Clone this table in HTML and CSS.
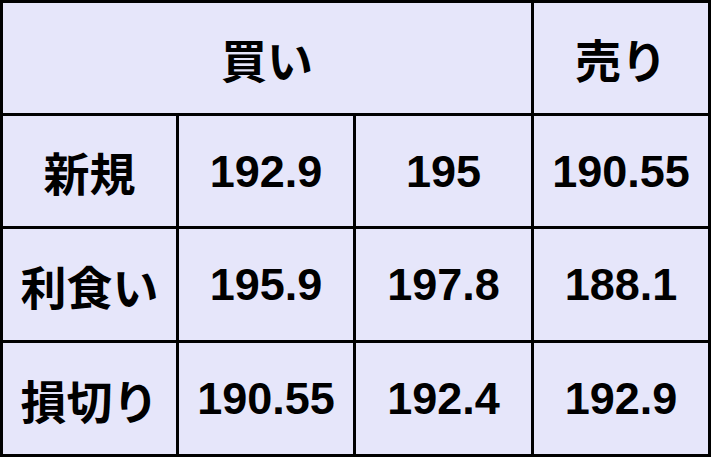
FILE: index.html
```html
<!DOCTYPE html>
<html lang="ja">
<head>
<meta charset="utf-8">
<title>売買表</title>
<link rel="stylesheet" href="styles.css">
</head>
<body>
<div class="grid">
  <div class="cell head span3">買い</div>
  <div class="cell head">売り</div>

  <div class="cell label">新規</div>
  <div class="cell num">192.9</div>
  <div class="cell num">195</div>
  <div class="cell num">190.55</div>

  <div class="cell label">利食い</div>
  <div class="cell num">195.9</div>
  <div class="cell num">197.8</div>
  <div class="cell num">188.1</div>

  <div class="cell label">損切り</div>
  <div class="cell num">190.55</div>
  <div class="cell num">192.4</div>
  <div class="cell num">192.9</div>
</div>
</body>
</html>
```

FILE: styles.css
```css
html, body {
  margin: 0;
  padding: 0;
  background: #e6e6fa;
}

.grid {
  display: grid;
  grid-template-columns: 173px 174px 175px 174px;
  grid-template-rows: 110px 110px 111px 111px;
  gap: 3px;
  padding: 3px;
  width: 711px;
  height: 457px;
  box-sizing: border-box;
  background: #000;
}

.cell {
  background: #e6e6fa;
  display: flex;
  align-items: center;
  justify-content: center;
  color: #000;
  font-family: "Liberation Sans", Arial, "Noto Sans CJK JP", sans-serif;
  font-size: 46px;
  font-weight: 700;
  line-height: 1;
}

.span3 {
  grid-column: span 3;
}

.head, .label {
  font-family: "Noto Sans CJK JP", sans-serif;
  font-weight: 700;
}

.num {
  font-size: 45px;
}
```
